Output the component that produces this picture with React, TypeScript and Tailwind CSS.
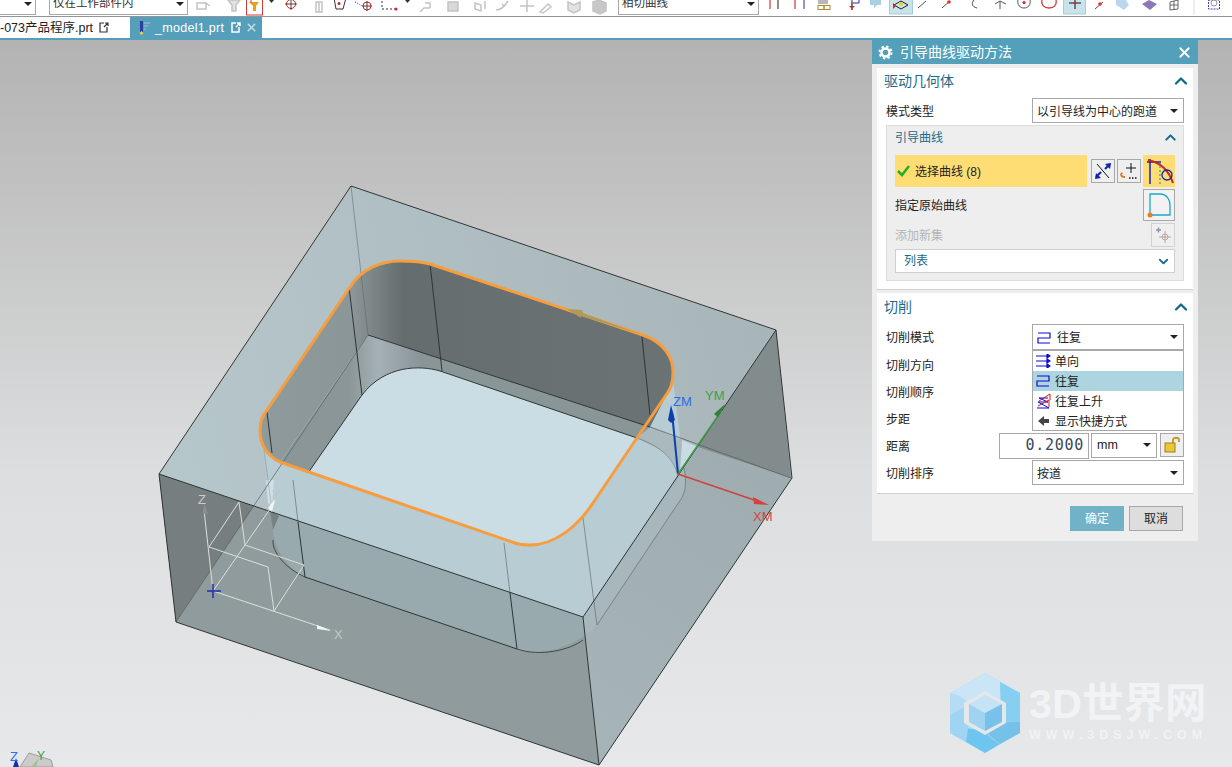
import React from 'react';
import { ChevronUp, ChevronDown, X } from 'lucide-react';

const Caret = () => <span className="w-0 h-0 border-x-[4px] border-x-transparent border-t-[4px] border-t-[#222]" />;

const Select: React.FC<{ children: React.ReactNode; className?: string }> = ({ children, className }) => (
    <div className={`flex items-center justify-between bg-white border border-[#a8a8a8] pl-[4px] pr-[5px] text-[12px] text-[#222] ${className}`}>
        <div className="flex items-center gap-[6px] pt-[2px]">{children}</div>
        <Caret />
    </div>
);

const Row: React.FC<{ label: string; children?: React.ReactNode; className?: string }> = ({ label, children, className }) => (
    <div className={`flex items-center justify-between pl-[9px] pr-[9px] text-[12px] text-[#222] ${className}`}>
        <span className="pt-[2px]">{label}</span>
        {children}
    </div>
);

const SingleIcon = ({ size = 15 }: { size?: number }) => (
    <svg width={size} height={14} viewBox="0 0 15 14" fill="none" stroke="#0a0ad8" strokeWidth="1.2">
        <path d="M0 2h12M0 7h12M0 12h12" />
        <path d="M11 0l3 2-3 2zM11 5l3 2-3 2zM11 10l3 2-3 2z" fill="#0a0ad8" />
    </svg>
);

const ZigIcon = () => (
    <svg width={14} height={12} viewBox="0 0 14 12" fill="none" stroke="#0a0ad8" strokeWidth="1.2">
        <path d="M1 1H13V6H1V11H13" />
    </svg>
);

const ZigRiseIcon = () => (
    <svg width={15} height={16} viewBox="0 0 15 16" fill="none" strokeWidth="1">
        <path d="M1 15h12L2 9h10L3 5h9" stroke="#0a0ad8" />
        <path d="M3 8l11-7M14 1v6M2 13l11-6v7" stroke="#e01010" />
    </svg>
);

const Gear = () => (
    <svg width={15} height={15} viewBox="0 0 15 15" fill="none" stroke="#fff">
        <circle cx="7.500" cy="7.500" r="4" strokeWidth="2.500" />
        <circle cx="7.500" cy="7.500" r="6" strokeWidth="2" strokeDasharray="2.400 2.300" />
    </svg>
);

// toolbar icons, drawn in page coordinates, cut off by the edge of the window
const ToolbarLeft = () => (
    <svg width={430} height={16} viewBox="189 0 430 16" fill="none">
        <g stroke="#c4c4c4" strokeWidth="1.500">
            <path d="M198 3v6h9V3zM207 3l4 3" />
            <path d="M229 0h12l-4 5v6h-4V5z" fill="#e2e2e2" />
            <path d="M317 2v10h6V2zM320 2v10" />
            <path d="M421 12l4-4h6M426 3h5v5" />
            <path d="M449 2h10v9h-10z" fill="#d8d8d8" />
            <path d="M476 3l6 2v6l-6-2zM486 1v8" />
            <path d="M497 10c5 0 9-4 12-9M503 4l2 2" />
            <path d="M528 0v12M521 6h14" />
            <path d="M541 12l8-8 3 3-8 6z" />
            <path d="M569 2l6 3 6-3v8l-6 3-6-3z" fill="#e2e2e2" />
            <path d="M594 2l6-2 7 3v8l-6 3-7-3z" fill="#c8c8c8" />
        </g>
        <rect x="247.500" y="-6" width="16" height="21" stroke="#d23a3a" />
        <path d="M250 2h10l-3 4v5h-3V6z" fill="#e8a020" />
        <path d="M252 -1v4" stroke="#d23a3a" />
        <path d="M270 0h5l-2.500 3z" fill="#333" />
        <circle cx="292" cy="4" r="4.500" stroke="#d22" />
        <path d="M286 4h12M292 -2v12" stroke="#222" strokeWidth="0.800" />
        <path d="M335 -2l2 11h7l3-11" stroke="#333" fill="#fff" />
        <circle cx="340" cy="3.500" r="1.500" fill="#d22" />
        <path d="M356 2l4 2 3 2" stroke="#333" strokeDasharray="1 1.500" />
        <circle cx="368" cy="6" r="4" stroke="#d22" />
        <path d="M363 6h10M368 1v10" stroke="#222" strokeWidth="0.800" />
        <path d="M383 1v8h14" stroke="#333" strokeDasharray="2 2" />
        <circle cx="397" cy="9" r="1.500" fill="#d22" />
        <path d="M406 0h5l-2.500 3z" fill="#333" />
    </svg>
);

const ToolbarRight = () => (
    <svg width={472} height={16} viewBox="760 0 472 16" fill="none">
        <path d="M771 0v9" stroke="#d33" strokeWidth="1.200" />
        <path d="M779 0v9" stroke="#444" strokeWidth="1.200" />
        <path d="M796 0v9" stroke="#d33" strokeWidth="1.200" />
        <path d="M805 0v9" stroke="#7a3fa0" strokeWidth="1.200" />
        <rect x="819" y="0" width="10" height="4" fill="#b8b8b8" />
        <rect x="819" y="5.500" width="6" height="4" stroke="#b08a20" />
        <rect x="825" y="5.500" width="6" height="4" stroke="#b08a20" />
        <path d="M853 0v3h7V0" stroke="#2a2aa0" />
        <path d="M853 2v8" stroke="#777" strokeWidth="2" />
        <path d="M850 6l3 3 3-3z" fill="#c33" />
        <path d="M871 0h11v5h-4l-3 3V5h-4z" fill="#a8d2de" />
        <rect x="890.500" y="-3" width="23" height="17" fill="#c8e3ea" stroke="#a8cdd8" />
        <path d="M895 5l7-4 7 4-7 4z" stroke="#222" />
        <circle cx="902" cy="4" r="2" fill="#f4d020" />
        <path d="M894 3v6l3-3z" fill="#d22" />
        <path d="M919 8l8-7" stroke="#555" />
        <path d="M943 8l8-7" stroke="#555" />
        <circle cx="950" cy="2" r="1.800" fill="#d33" />
        <path d="M975 0c-3 3-2 7 3 8" stroke="#444" />
        <path d="M996 4l5-3 6 3M1001 1v8" stroke="#555" />
        <path d="M1019 0c-1 5 2 8 6 8s7-3 6-8" stroke="#555" />
        <circle cx="1025" cy="2.500" r="1.500" fill="#c22" />
        <path d="M1043 0c-1 5 2 8 7 8s8-3 7-8" stroke="#d33" strokeWidth="1.300" />
        <rect x="1064.500" y="-3" width="22" height="17" fill="#c8e3ea" stroke="#a8cdd8" />
        <path d="M1070 3h12M1076 -2v11" stroke="#111" />
        <circle cx="1076" cy="3" r="1.300" fill="#d22" />
        <path d="M1096 9l8-7" stroke="#9a3a3a" />
        <circle cx="1101" cy="4" r="1.800" fill="#d33" />
        <path d="M1117 0h10l3 5-5 5-8-5z" fill="#bcd6ee" />
        <path d="M1143 4l7-4 8 4-7 6z" fill="#8a78b8" />
        <path d="M1171 2l8-2v9l-8 1zM1175 1v9M1171 5h8" stroke="#666" />
        <path d="M1195 0v15" stroke="#ddd" />
        <rect x="1209.500" y="0" width="11" height="9" stroke="#4040c0" strokeDasharray="2 1" />
        <circle cx="1215" cy="3" r="3" stroke="#999" />
    </svg>
);

const Model = () => (
    <svg className="absolute inset-0" width={1232} height={727} viewBox="0 40 1232 727" fill="none">
        <defs>
            <linearGradient id="top" gradientUnits="userSpaceOnUse" x1="160" y1="450" x2="780" y2="300">
                <stop offset="0" stopColor="#b6c7cb" />
                <stop offset="1" stopColor="#a8b5b8" />
            </linearGradient>
            <linearGradient id="wall" gradientUnits="userSpaceOnUse" x1="260" y1="0" x2="680" y2="0">
                <stop offset="0" stopColor="#8f9a9c" />
                <stop offset="0.22" stopColor="#8b9698" />
                <stop offset="0.34" stopColor="#656d6e" />
                <stop offset="1" stopColor="#6b7374" />
            </linearGradient>
            <linearGradient id="band" gradientUnits="userSpaceOnUse" x1="350" y1="0" x2="420" y2="0">
                <stop offset="0" stopColor="#8b9698" />
                <stop offset="0.4" stopColor="#a5b1b5" />
                <stop offset="1" stopColor="#8a9598" />
            </linearGradient>
            <linearGradient id="rightFace" gradientUnits="userSpaceOnUse" x1="790" y1="480" x2="600" y2="760">
                <stop offset="0" stopColor="#9fadb1" />
                <stop offset="1" stopColor="#a6b3b7" />
            </linearGradient>
            <clipPath id="clipTop"><path d="M351 186L776 330L583 617L159 474Z" /></clipPath>
            <clipPath id="clipFront"><path d="M159 474L583 617L599 765L176 622Z" /></clipPath>
            <clipPath id="clipRight"><path d="M776 330L792 478L599 765L583 617Z" /></clipPath>
        </defs>

        {/* box faces */}
        <path d="M351 186L776 330L583 617L159 474Z" fill="url(#top)" />
        <path d="M159 474L583 617L599 765L176 622Z" fill="#8f9b9c" />
        <path d="M776 330L792 478L599 765L583 617Z" fill="url(#rightFace)" />
        <path d="M776 330L791 478L698 447Z" fill="#838c8c" />
        <path d="M159 474L176 622L254 506Z" fill="#767e7f" />

        {/* pocket seen through the faces */}
        <path d="M262 440L272 520C272 545 285 568 305 577L517 649C540 657 575 648 597 625L681 500C687 490 687 480 684 468L673 380L430 264L350 287Z" fill="#b8ccd3" clipPath="url(#clipTop)" />
        <path d="M262 440L272 520C272 545 285 568 305 577L517 649C540 657 575 648 597 625L681 500C687 490 687 480 684 468L673 380L430 264L350 287Z" fill="#99aaae" clipPath="url(#clipFront)" />
        <path d="M262 440L272 520C272 545 285 568 305 577L517 649C540 657 575 648 597 625L681 500C687 490 687 480 684 468L673 380L430 264L350 287Z" fill="#a8b7bb" clipPath="url(#clipRight)" />
        <path d="M266 480L274 480L272 506L268 503Z" fill="#cfe0e6" />
        <path d="M270 510L279 516L273 530Z" fill="#778083" />
        <path d="M650 427L698 447L678 476C676 462 668 452 650 445L637 438Z" fill="#a9b9bd" />
        <path d="M682 440L698 447L680 474C680 462 682 450 682 440Z" fill="#c9dce3" />

        {/* pocket floor and walls */}
        <path d="M430 264L643 335C665 343 673 358 673 372C673 382 671 388 668 392L593 503C578 526 555 545 530 545C525 545 520 545 515 543L280 462C268 456 260 445 260 430C260 420 263 415 267 410L350 287C362 268 382 261 400 261C412 261 420 261 430 264Z" fill="#cbdde4" />
        <path d="M368 335L650 427L637 438L440 371C420 365 385 365 362 395L308 473L280 462Z" fill="url(#band)" />
        <path d="M280 462C268 456 260 445 260 430C260 420 263 415 267 410L350 287C362 268 382 261 400 261C412 261 420 261 430 264L643 335C665 343 673 358 673 372C673 382 671 388 668 392L650 427L368 335Z" fill="url(#wall)" />

        {/* see-through lines */}
        <g stroke="#5a6365" strokeWidth="1">
            <path d="M351 186L368 335" opacity="0.5" />
            <path d="M368 335L176 622" opacity="0.7" />
            <path d="M650 427L791 478" opacity="0.8" />
            <path d="M293 480L298 522" opacity="0.6" />
            <path d="M504 543L510 593" opacity="0.6" />
            <path d="M583 518L597 625" opacity="0.6" />
            <path d="M264 450L272 510" opacity="0.3" />
            <path d="M637 438C660 446 674 458 678 476" opacity="0.5" />
            <path d="M684 468C688 488 684 496 677 505L597 625" opacity="0.6" />
        </g>
        <g stroke="#2f3536" strokeWidth="1">
            <path d="M349 287L362 395M430 264L442 371M642 337L650 415M267 412L272 453" />
            <path d="M368 335L650 427M637 438L440 371C420 365 385 365 362 395L308 473" />
            <path d="M298 522L305 577L517 649M510 593L517 649" />
            <path d="M273 540C272 552 285 568 305 577M517 649C540 657 570 650 583 640" strokeWidth="0.800" />
            <path d="M351 186L776 330L792 478L599 765L176 622L159 474Z" />
            <path d="M159 474L583 617L776 330M583 617L599 765" />
        </g>

        {/* work coordinate system */}
        <g stroke="#dcdedd" strokeWidth="1">
            <path d="M213 591L204 510M213 591L330 630M213 591L275 502" />
            <path d="M209 547L268 567L274 611M209 547L239 502L245 545L304 565L274 611" />
        </g>
        <path d="M203 514L204 503L208 514Z" fill="#8a8f90" />
        <path d="M317 625L331 631L317 629Z" fill="#f4f4f4" />
        <path d="M268 508L275 499L272 512Z" fill="#f4f4f4" />
        <path d="M207 591H221M213 584V598" stroke="#1f2fa8" strokeWidth="1.500" />

        {/* drive curve */}
        <path d="M430 264L643 335C665 343 673 358 673 372C673 382 671 388 668 392L593 503C578 526 555 545 530 545C525 545 520 545 515 543L280 462C268 456 260 445 260 430C260 420 263 415 267 410L350 287C362 268 382 261 400 261C412 261 420 261 430 264Z" stroke="#f79d3e" strokeWidth="3" />
        <path d="M567 309L582 310L583 313L640 334L581 316L581 318Z" fill="#b09a58" />

        {/* datum triad */}
        <path d="M678 474L672 412" stroke="#0a3fb0" strokeWidth="2" />
        <path d="M671 405L675 420L671 423L668 420Z" fill="#0a3fb0" />
        <path d="M678 474L722 410" stroke="#3e9a45" strokeWidth="1.500" />
        <path d="M725 404L718 417L714 414Z" fill="#2f7f38" />
        <path d="M678 474L760 502" stroke="#d2403f" strokeWidth="1.500" />
        <path d="M769 505L753 497L754 504Z" fill="#d2403f" />

        {/* small orientation triad */}
        <path d="M20 767L29 753L51 760L53 767Z" fill="#c9cccb" stroke="#9a9d9c" />
        <path d="M31 767L39 758L36 767Z" fill="#9fc09f" />
        <path d="M13 767L16 758L19 767Z" fill="#1030b0" />

        {/* watermark */}
        <path d="M985 673L1020 693V733L985 753L950 733V693Z" fill="#b5dcf4" />
        <path d="M985 673L1000 682C1005 695 1003 700 1001 706L985 695L969 705C965 698 960 695 950 693Z" fill="#c9e5f6" />
        <path d="M1000 682L1020 693V722C1012 722 1006 722 1001 721Z" fill="#87cef3" />
        <path d="M1020 722V733L1000 744C994 740 990 736 985 731L1002 722Z" fill="#75c1e9" />
        <path d="M966 728L985 731C990 738 996 742 1000 744L985 753L966 742Z" fill="#6dc5f0" />
        <path d="M950 715C956 712 962 708 969 705V722L966 742L950 733Z" fill="#a0d4f3" />
        <path d="M985 691L1006 703V723L985 735L964 723V703Z" fill="#e6e7e9" />
        <path d="M985 695L1002 704L985 713L969 704Z" fill="#c5e3f6" />
        <path d="M969 704L985 713V731L969 722Z" fill="#a0d2f2" />
        <path d="M1002 704V722L985 731V713Z" fill="#78c1ea" />
    </svg>
);

const DialogPanel = () => (
    <div className="absolute left-[872px] top-0 w-[326px] h-[501px] bg-[#eeeeee] flex flex-col">
        <div className="h-[26px] shrink-0 -mt-[2px] pt-[2px] bg-[#54a0ba] flex items-center justify-between pl-[6px] pr-[5px] text-white text-[14px]">
            <div className="flex items-center gap-[7px]">
                <Gear />
                <span>引导曲线驱动方法</span>
            </div>
            <X size={17} strokeWidth={2.500} />
        </div>

        <div className="mt-[4px] mx-[5px] h-[222px] bg-white border-b border-[#cfcfcf] flex flex-col">
            <div className="h-[26px] flex items-center justify-between pl-[7px] pr-[2px] text-[14px] text-[#1d6a8a]">
                <span>驱动几何体</span>
                <ChevronUp size={20} strokeWidth={2.800} className="text-[#0f6a8c]" />
            </div>
            <Row label="模式类型" className="h-[25px] mt-[4px]">
                <Select className="w-[152px] h-[25px]">以引导线为中心的跑道</Select>
            </Row>
            <div className="mt-[2px] mx-[9px] h-[156px] bg-[#eeeeee] border border-[#dcdcdc] px-[8px] flex flex-col text-[12px] text-[#222]">
                <div className="h-[22px] flex items-center justify-between text-[12px] text-[#1d6a8a]">
                    <span className="pt-[2px]">引导曲线</span>
                    <ChevronUp size={17} strokeWidth={2.800} className="text-[#0f6a8c] -mr-[4px]" />
                </div>
                <div className="mt-[7px] h-[32px] flex items-center">
                    <div className="w-[192px] h-full bg-[#fedd75] flex items-center pl-[2px] gap-[5px] text-[12px]">
                        <svg width={13} height={12} viewBox="0 0 13 12" fill="none">
                            <path d="M1 6l4 4 7-9" stroke="#22b022" strokeWidth="2.500" />
                        </svg>
                        <span className="pt-[2px]">选择曲线 (8)</span>
                    </div>
                    <div className="ml-[4px] w-[24px] h-[24px] bg-[#efefef] border border-[#a8a8a8] flex items-center justify-center">
                        <svg width={20} height={20} viewBox="0 0 20 20" fill="none">
                            <path d="M4 3l12 14" stroke="#111" />
                            <path d="M3 16l5-5M12 8l5-5" stroke="#1224b0" strokeWidth="2" />
                            <path d="M2 18l1-6 5 5zM18 2l-1 6-5-5z" fill="#1224b0" />
                        </svg>
                    </div>
                    <div className="ml-[2px] w-[24px] h-[24px] bg-[#efefef] border border-[#a8a8a8] flex items-center justify-center">
                        <svg width={20} height={20} viewBox="0 0 20 20" fill="none">
                            <path d="M12 2v10M7 7h10" stroke="#111" />
                            <path d="M2 13c0 2 1 3 4 3" stroke="#e07a20" strokeWidth="1.800" />
                            <path d="M1 13h3l-1-2z" fill="#e07a20" />
                            <path d="M10 17h1.500M13 17h1.500M16 17h1.500" stroke="#111" strokeWidth="1.500" />
                        </svg>
                    </div>
                    <div className="ml-[2px] w-[32px] h-[32px] bg-[#fedd75] flex items-center justify-center">
                        <svg width={30} height={30} viewBox="0 0 30 30" fill="none">
                            <path d="M6 3v25" stroke="#1224b0" strokeWidth="1.500" />
                            <path d="M3 6h14" stroke="#1224b0" strokeWidth="1.500" />
                            <path d="M4 4c10 2 20 8 25 23" stroke="#c8281e" strokeWidth="2" />
                            <path d="M16 6v22" stroke="#108888" strokeDasharray="2 2" />
                            <circle cx="23" cy="19" r="5" stroke="#1224b0" strokeWidth="1.300" />
                        </svg>
                    </div>
                </div>
                <div className="mt-[2px] h-[32px] flex items-center justify-between">
                    <span className="pt-[2px]">指定原始曲线</span>
                    <div className="w-[32px] h-[32px] bg-[#f2f2f2] border border-[#a8a8a8] flex items-center justify-center">
                        <svg width={28} height={28} viewBox="0 0 28 28" fill="none">
                            <path d="M5 24V3h10c7 0 10 6 10 11v10z" stroke="#18a8cc" strokeWidth="1.300" />
                            <circle cx="5" cy="24" r="2.500" fill="#ee7a18" />
                        </svg>
                    </div>
                </div>
                <div className="mt-[2px] h-[24px] flex items-center justify-between text-[#b4b4b4]">
                    <span className="pt-[2px]">添加新集</span>
                    <div className="w-[24px] h-[24px] bg-[#efefef] border border-[#d2d2d2] flex items-center justify-center">
                        <svg width={20} height={20} viewBox="0 0 20 20" fill="none">
                            <circle cx="12" cy="12" r="3" stroke="#d4a0a0" />
                            <path d="M6 12h12M12 6v12" stroke="#aaa" />
                            <path d="M3 5h5M5.500 2.500v5" stroke="#8a96b0" strokeWidth="1.500" />
                        </svg>
                    </div>
                </div>
                <div className="mt-[2px] h-[24px] bg-white border border-[#cfcfcf] flex items-center justify-between pl-[8px] pr-[3px] text-[#1d6a8a]">
                    <span>列表</span>
                    <ChevronDown size={15} strokeWidth={3} className="text-[#0f6a8c]" />
                </div>
            </div>
        </div>

        <div className="relative mt-[3px] mx-[5px] h-[201px] bg-white border-b border-[#cfcfcf] flex flex-col">
            <div className="h-[27px] flex items-center justify-between pl-[7px] pr-[2px] text-[14px] text-[#1d6a8a]">
                <span className="pt-[2px]">切削</span>
                <ChevronUp size={20} strokeWidth={2.800} className="text-[#0f6a8c]" />
            </div>
            <Row label="切削模式" className="h-[26px] mt-[4px]">
                <Select className="w-[152px] h-[26px]">
                    <ZigIcon />
                    <span>往复</span>
                </Select>
            </Row>
            <Row label="切削方向" className="h-[27px] mt-[1px]" />
            <Row label="切削顺序" className="h-[27px]" />
            <Row label="步距" className="h-[27px]" />
            <Row label="距离" className="h-[27px]">
                <div className="flex items-start gap-[2px]">
                    <div className="w-[90px] h-[26px] bg-white border border-[#a8a8a8] flex items-center justify-end pr-[4px] text-[15px] tracking-[0.7px] text-[#3a4a5a] font-['DejaVu_Sans_Mono',monospace]">0.2000</div>
                    <div className="w-[66px] h-[25px] bg-white border border-[#a8a8a8] flex items-center justify-between pl-[5px] pr-[5px] text-[12.5px]">
                        <span>mm</span>
                        <Caret />
                    </div>
                    <div className="ml-[1px] w-[24px] h-[24px] bg-[#efefef] border border-[#a8a8a8] flex items-center justify-center">
                        <svg width={18} height={18} viewBox="0 0 18 18" fill="none">
                            <path d="M10 7V4c0-3 6-3 6 0v2" stroke="#c09a20" strokeWidth="1.800" />
                            <rect x="2" y="7" width="10" height="9" fill="#e8c838" stroke="#a08018" />
                        </svg>
                    </div>
                </div>
            </Row>
            <Row label="切削排序" className="h-[27px]">
                <Select className="w-[152px] h-[25px]">按道</Select>
            </Row>

            {/* open list of the cut mode select */}
            <div className="absolute left-[155px] top-[57px] w-[152px] h-[81px] bg-white border border-[#a8a8a8] flex flex-col text-[12px] text-[#222]">
                <div className="h-[20px] flex items-center gap-[4px] pl-[3px]"><SingleIcon /><span className="pt-[2px]">单向</span></div>
                <div className="h-[20px] flex items-center gap-[5px] pl-[3px] bg-[#add5e0]"><ZigIcon /><span className="pt-[2px]">往复</span></div>
                <div className="h-[20px] flex items-center gap-[4px] pl-[3px]"><ZigRiseIcon /><span className="pt-[2px]">往复上升</span></div>
                <div className="h-[20px] flex items-center gap-[4px] pl-[3px]">
                    <svg width={15} height={12} viewBox="0 0 15 12"><path d="M2 6l6-5v3h5v4H8v3z" fill="#444" /></svg>
                    <span className="pt-[2px]">显示快捷方式</span>
                </div>
            </div>
        </div>

        <div className="mt-[12px] pr-[15px] flex justify-end gap-[5px] text-[12px]">
            <div className="w-[54px] h-[25px] bg-[#71b2c9] text-white flex items-center justify-center">确定</div>
            <div className="w-[54px] h-[25px] bg-[#dddddd] border border-[#a8a8a8] text-[#222] flex items-center justify-center">取消</div>
        </div>
    </div>
);

const App: React.FC = () => {
    return (
        <div className="w-[1232px] h-screen overflow-hidden flex flex-col bg-white font-['Liberation_Sans','Noto_Sans_CJK_SC',sans-serif]">
            {/* toolbar, the top of it is out of the window */}
            <div className="h-[17px] shrink-0 flex items-end border-b border-[#8f979c] overflow-hidden">
                <div className="flex items-start h-[16px] text-[11.5px] text-[#333]">
                    <div className="w-[36px] h-[22px] -mt-[7px] border border-[#a8a8a8] border-l-0 flex items-center justify-end pr-[3px]"><Caret /></div>
                    <div className="ml-[13px] w-[139px] h-[22px] -mt-[7px] border border-[#a8a8a8] flex items-center justify-between pl-[3px] pr-[3px]">
                        <span>仅在工作部件内</span>
                        <Caret />
                    </div>
                    <ToolbarLeft />
                    <div className="w-[141px] h-[22px] -mt-[7px] border border-[#a8a8a8] flex items-center justify-between pl-[3px] pr-[3px]">
                        <span>相切曲线</span>
                        <Caret />
                    </div>
                    <ToolbarRight />
                </div>
            </div>

            {/* file tabs */}
            <div className="h-[21px] shrink-0 flex items-stretch text-[12.5px] text-[#222]">
                <div className="w-[130px] flex items-center whitespace-nowrap overflow-hidden">
                    <span className="pt-[2px]">-073产品程序.prt</span>
                    <svg className="ml-[6px]" width={10} height={11} viewBox="0 0 10 11" fill="none" stroke="#333" strokeWidth="1.200">
                        <path d="M8 5v5H1V1h4M5 5l4-4M6 1h3v3" />
                    </svg>
                </div>
                <div className="w-[132px] bg-[#569fbb] flex items-center text-white pl-[6px]">
                    <svg width={15} height={16} viewBox="0 0 15 16" fill="none">
                        <path d="M4 1h3v12H4z" fill="#2a3fa0" />
                        <path d="M8 3h6M8 6h4M8 9h2" stroke="#a6c4d0" />
                        <path d="M5.500 11l2 2-2 2-2-2z" fill="#f0d040" />
                    </svg>
                    <span className="ml-[4px] pt-[2px] tracking-[0.3px]">_model1.prt</span>
                    <svg className="ml-[7px]" width={10} height={11} viewBox="0 0 10 11" fill="none" stroke="#fff" strokeWidth="1.500">
                        <path d="M8 5v5H1V1h4M5 5l4-4M6 1h3v3" />
                    </svg>
                    <X className="ml-[4px] text-[#c6dbe3]" size={13} strokeWidth={3} />
                </div>
            </div>
            <div className="h-[2px] shrink-0 bg-[#569fbb]" />

            {/* graphics window */}
            <div className="relative flex-1 bg-gradient-to-b from-[#b3b3b3] via-[#dddedf] via-60% to-[#e7e8ea]">
                <Model />
                <span className="absolute left-[198px] top-[450px] text-[13px] text-[#c9cbcb]">Z</span>
                <span className="absolute left-[272px] top-[445px] text-[13px] text-[#c4c6c6]">Y</span>
                <span className="absolute left-[334px] top-[585px] text-[13px] text-[#c4c6c6]">X</span>
                <span className="absolute left-[673px] top-[352px] text-[13px] text-[#2a6ee8]">ZM</span>
                <span className="absolute left-[705px] top-[346px] text-[13px] text-[#3f9f4f]">YM</span>
                <span className="absolute left-[753px] top-[467px] text-[13px] text-[#d04545]">XM</span>
                <span className="absolute left-[10px] top-[707px] text-[13px] text-[#2a6ee8]">Z</span>
                <span className="absolute left-[37px] top-[707px] text-[12px] text-[#3f9f4f]">Y</span>
                <div className="absolute left-[1029px] top-[642px] text-[#f1f3f5]">
                    <div className="h-[44px] flex items-center text-[41.5px] font-bold leading-none whitespace-nowrap">3D世界网</div>
                    <div className="mt-[3px] text-[12.5px] font-bold tracking-[5px] leading-none whitespace-nowrap">WWW.3DSJW.COM</div>
                </div>
                <DialogPanel />
            </div>
        </div>
    );
};

export default App;
